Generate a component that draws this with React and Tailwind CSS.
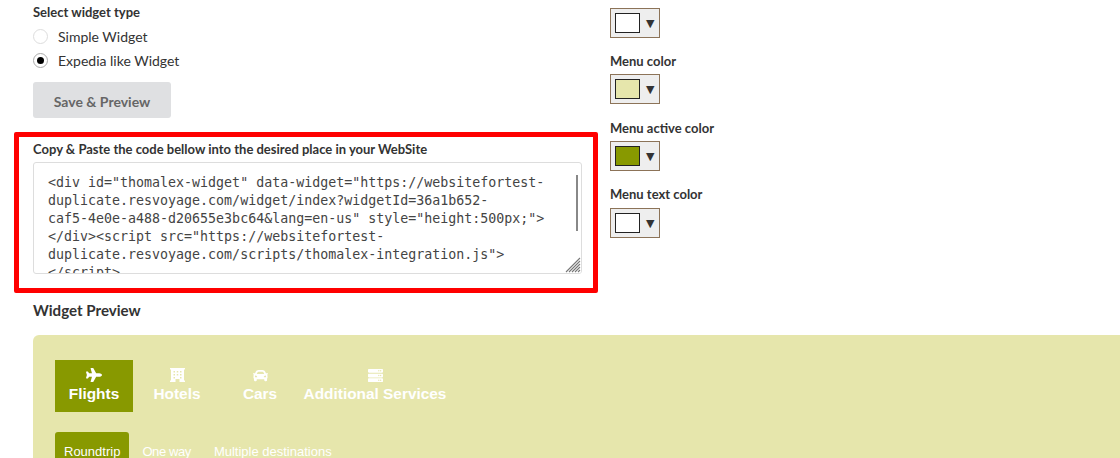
import { FaPlane, FaCar, FaServer } from 'react-icons/fa'

const codeLines = [
  '<div id="thomalex-widget" data-widget="https://websitefortest-',
  'duplicate.resvoyage.com/widget/index?widgetId=36a1b652-',
  'caf5-4e0e-a488-d20655e3bc64&lang=en-us" style="height:500px;">',
  '</div><script src="https://websitefortest-',
  'duplicate.resvoyage.com/scripts/thomalex-integration.js">',
  '</script>',
]

function ColorPicker({ color }) {
  return (
    <div className="flex h-[30px] w-[50px] items-center border border-[#8c7358] bg-[#eeeeee] pl-1">
      <div className={`h-5 w-[25px] border border-[#222] ${color}`}></div>
      <span className="ml-[6px] text-[11px] leading-none text-[#333] font-['DejaVu_Sans',sans-serif]">▼</span>
    </div>
  )
}

function Radio({ checked, label }) {
  return (
    <div className="flex h-[24px] items-center">
      <div className={`flex h-[15px] w-[15px] items-center justify-center rounded-full border bg-white ${checked ? 'border-[#aaa]' : 'border-[#ddd]'}`}>
        {checked && <div className="h-[7px] w-[7px] rounded-full bg-black"></div>}
      </div>
      <span className="ml-[10px] text-[14px] text-[#333]">{label}</span>
    </div>
  )
}

function MainTab({ icon, label, active, width }) {
  return (
    <div className={`flex h-[52px] flex-col items-center pt-[7px] text-white ${width} ${active ? 'bg-[#889900]' : ''}`}>
      <div className="flex h-[16px] items-center">{icon}</div>
      <div className="mt-[1px] text-[15.4px] leading-[20px] font-bold font-['Liberation_Sans',sans-serif]">{label}</div>
    </div>
  )
}

// building with a grid of windows and a door, wider at the base
function BuildingIcon() {
  return (
    <svg width="15" height="14" viewBox="0 0 15 14">
      <path
        fillRule="evenodd"
        fill="currentColor"
        d="M0 0H15V1.5H14V12.5H15V14H9.5V11H5.5V14H0V12.5H1V1.5H0ZM3.5 3V4.5H5V3ZM6.75 3V4.5H8.25V3ZM10 3V4.5H11.5V3ZM3.5 6V7.5H5V6ZM6.75 6V7.5H8.25V6ZM10 6V7.5H11.5V6ZM3.5 9V10.5H5V9ZM10 9V10.5H11.5V9Z"
      />
    </svg>
  )
}

export default function App() {
  return (
    <div className="h-[458px] w-[1120px] overflow-hidden bg-white font-['Lato',sans-serif] text-[#333]">
      <div className="flex">
        <div className="ml-[14px] w-[584px]">
          <div className="pl-[19px] pt-[4px]">
            <div className="text-[13px] leading-[17px] font-bold">Select widget type</div>
            <div className="mt-[3px]">
              <Radio label="Simple Widget" />
              <Radio checked label="Expedia like Widget" />
            </div>
            <button className="mt-[10px] block h-[36px] w-[138px] rounded-[3px] bg-[#dfe0e2] pt-[2px] text-[14px] font-bold text-[#666]">
              Save &amp; Preview
            </button>
          </div>

          <div className="mt-[14px] h-[161px] rounded-[2px] border-[5px] border-[#ff0000] pl-[14px] pt-[4px]">
            <div className="text-[13px] leading-[17px] font-bold">Copy &amp; Paste the code bellow into the desired place in your WebSite</div>
            <div className="relative mt-[4px] h-[112px] w-[549px] overflow-hidden rounded-[3px] border border-[#dddddd] bg-white pl-[14px] pt-[11px] font-['DejaVu_Sans_Mono',monospace] text-[13.3px] leading-[18px] text-[#444]">
              {codeLines.map(line => (
                <div key={line} className="whitespace-pre">{line}</div>
              ))}
              <div className="absolute right-[3px] top-[12px] h-[56px] w-[2px] bg-[#888]"></div>
              <svg className="absolute bottom-0 right-0 bg-white" width="16" height="16" viewBox="0 0 16 16">
                <path d="M1 15 15 1M4 15 15 4M7 15 15 7M10 15 15 10M13 15 15 13" stroke="#777" strokeWidth="1.1" fill="none" />
              </svg>
            </div>
          </div>
        </div>

        <div className="ml-[12px] pt-[8px] text-[13px] leading-[17px] font-bold">
          <ColorPicker color="bg-white" />
          <div className="mt-[15px]">Menu color</div>
          <div className="mt-[4px]"><ColorPicker color="bg-[#e6e6ac]" /></div>
          <div className="mt-[16px]">Menu active color</div>
          <div className="mt-[4px]"><ColorPicker color="bg-[#889900]" /></div>
          <div className="mt-[15px]">Menu text color</div>
          <div className="mt-[5px]"><ColorPicker color="bg-white" /></div>
        </div>
      </div>

      <div className="ml-[33px] mt-[7px] text-[15.1px] leading-[20px] font-bold">Widget Preview</div>

      <div className="ml-[33px] mt-[15px] h-[200px] rounded-tl-[6px] bg-[#e6e6ac] pl-[22px] pt-[25px]">
        <div className="flex">
          <MainTab active width="w-[78px]" icon={<FaPlane size={16} />} label="Flights" />
          <MainTab width="w-[88px]" icon={<BuildingIcon />} label="Hotels" />
          <MainTab width="w-[78px]" icon={<FaCar size={15} />} label="Cars" />
          <MainTab width="w-[152px]" icon={<FaServer size={15} />} label="Additional Services" />
        </div>
        <div className="mt-[20px] flex font-['Liberation_Sans',sans-serif] text-[13px] leading-[40px] text-white">
          <div className="h-[40px] rounded-t-[3px] bg-[#889900] px-[9px]">Roundtrip</div>
          <div className="ml-[13px] tracking-[-0.4px]">One way</div>
          <div className="ml-[23px]">Multiple destinations</div>
        </div>
      </div>
    </div>
  )
}
